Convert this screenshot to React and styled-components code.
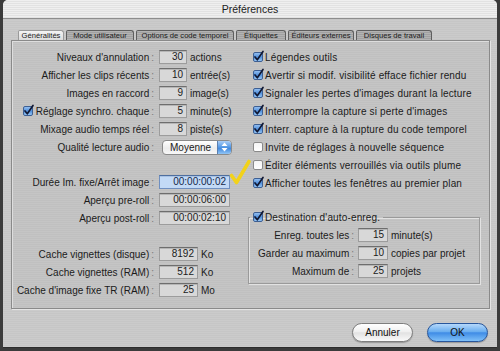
import React from 'react';
import styled, { createGlobalStyle } from 'styled-components';

const Global = createGlobalStyle`
  html, body { margin: 0; padding: 0; background: #3b3b3b; }
  body {
    width: 500px; height: 351px; overflow: hidden;
    font-family: "Liberation Sans", Arial, sans-serif;
    color: #1b1b1b;
  }
`;

const Window = styled.div`
  margin-left: 3px;
  width: 494px;
  height: 348px;
  box-sizing: border-box;
  display: flex;
  flex-direction: column;
  background: repeating-linear-gradient(180deg, #cbcbcb 0 1px, #c6c6c6 1px 2px);
  border-radius: 5px 5px 0 0;
  border-bottom: 1px solid #2c2c2c;
  overflow: hidden;
`;

const TitleBar = styled.div`
  height: 19px;
  flex: none;
  box-sizing: border-box;
  display: flex;
  align-items: center;
  justify-content: center;
  background: repeating-linear-gradient(180deg, #efefef 0 1px, #e2e2e2 1px 2px);
  border-bottom: 1px solid #8d8d8d;
  font-size: 10.5px;
  color: #1c1c1c;
`;

const Tabs = styled.div`
  display: flex;
  height: 10px;
  margin-top: 11px;
  padding-left: 15px;
  flex: none;
`;

const Tab = styled.div`
  width: ${p => p.$w}px;
  height: 10px;
  box-sizing: border-box;
  display: flex;
  align-items: center;
  justify-content: center;
  font-size: 7.6px;
  white-space: nowrap;
  margin-right: 2px;
  color: #1a1a1a;
  border: 1px solid ${p => (p.$active ? '#9a9a9a' : '#5e5e5e')};
  border-bottom: none;
  border-radius: 2px 3px 0 0;
  background: ${p =>
    p.$active
      ? 'linear-gradient(#f4f4f4, #dcdcdc)'
      : 'repeating-linear-gradient(180deg, #b3b3b3 0 1px, #a1a1a1 1px 2px)'};
`;

const Panel = styled.div`
  margin: 0 7px 0 8px;
  height: 269px;
  box-sizing: border-box;
  flex: none;
  display: flex;
  padding-top: 7px;
  border: 1px solid #8a8a8a;
  box-shadow: inset 1px 1px 0 #dedede, 1px 1px 0 #e4e4e4;
  background: repeating-linear-gradient(180deg, #c5c5c5 0 1px, #c0c0c0 1px 2px);
`;

const Column = styled.div`
  width: ${p => p.$w}px;
  flex: none;
  display: flex;
  flex-direction: column;
`;

const Section = styled.div`
  display: flex;
  flex-direction: column;
  margin-top: ${p => p.$mt || 0}px;
`;

const Row = styled.div`
  display: flex;
  align-items: center;
  height: 18px;
  flex: none;
  padding-left: ${p => p.$pl || 0}px;
`;

const Label = styled.span`
  width: ${p => p.$w}px;
  flex: none;
  display: flex;
  justify-content: flex-end;
  align-items: center;
  white-space: nowrap;
  font-size: 10px;
`;

const Colon = styled.span`
  color: #7a7a7a;
  margin-left: 2px;
`;

const Field = styled.div`
  width: ${p => p.$w}px;
  height: 14px;
  flex: none;
  margin-left: ${p => (p.$ml == null ? 5 : p.$ml)}px;
  box-sizing: border-box;
  border: 1px solid ${p => (p.$focus ? '#6f8fc0' : '#9c9c9c')};
  border-top-color: ${p => (p.$focus ? '#4f6f9f' : '#6e6e6e')};
  background: ${p => (p.$focus ? '#c3daf6' : '#d8d8d8')};
  box-shadow: inset 0 1px 0 ${p => (p.$focus ? '#a8c2e4' : '#b6b6b6')};
  text-align: right;
  padding-right: 3px;
  font-size: 10px;
  line-height: 12px;
  color: ${p => (p.$focus ? '#14284a' : '#1b1b1b')};
`;

const Unit = styled.span`
  margin-left: 3px;
  font-size: 10px;
  white-space: nowrap;
`;

const CheckText = styled.span`
  margin-left: 2px;
  font-size: 10px;
  letter-spacing: 0.15px;
  white-space: nowrap;
`;

const Select = styled.div`
  margin-left: 8px;
  width: 70px;
  height: 15px;
  box-sizing: border-box;
  display: flex;
  border: 1px solid #8a8a8a;
  border-radius: 4px;
  overflow: hidden;
  background: linear-gradient(#ffffff, #ececec 55%, #f8f8f8);
`;

const SelectText = styled.span`
  flex: 1;
  padding-left: 7px;
  font-size: 10px;
  line-height: 13px;
`;

const SelectArrows = styled.span`
  width: 13px;
  display: flex;
  align-items: center;
  justify-content: center;
  background: linear-gradient(#a9cdf6, #4f95e4 50%, #3a82da 52%, #92c6f6);
  border-left: 1px solid #5a7fb0;
`;

const Group = styled.fieldset`
  margin: 16px 0 0 0;
  padding: 0 0 3px 0;
  width: 232px;
  box-sizing: border-box;
  border: 1px solid #9a9a9a;
  box-shadow: inset 1px 1px 0 #e2e2e2, 1px 1px 0 #e2e2e2;
  display: flex;
  flex-direction: column;
`;

const Legend = styled.legend`
  padding: 0 3px 0 3px;
  margin-left: 1px;
  height: 18px;
  display: flex;
  align-items: center;
`;

const Footer = styled.div`
  display: flex;
  justify-content: flex-end;
  gap: 14px;
  padding: 14px 9px 0 0;
`;

const Button = styled.button`
  width: 61px;
  height: 19px;
  padding: 0;
  border-radius: 10px;
  font-family: "Liberation Sans", Arial, sans-serif;
  font-size: 10px;
  color: #111;
  border: 1px solid ${p => (p.$primary ? '#27569c' : '#7e7e7e')};
  background: ${p =>
    p.$primary
      ? 'linear-gradient(#b5d8fb 0%, #6aaef0 45%, #3f8ce6 52%, #7fc0f8 100%)'
      : 'linear-gradient(#ffffff 0%, #f0f0f0 45%, #e2e2e2 52%, #fafafa 100%)'};
  box-shadow: 0 1px 1px rgba(0,0,0,0.25);
`;

const Mark = styled.svg`
  flex: none;
  margin-bottom: 20px;
  overflow: visible;
`;

function Check({ on }) {
  return (
    <svg width="10" height="10" viewBox="0 0 10 10" style={{ flex: 'none', overflow: 'visible' }}>
      <defs>
        <linearGradient id="cbg" x1="0" y1="0" x2="0" y2="1">
          <stop offset="0" stopColor="#9cc4f2" />
          <stop offset="0.5" stopColor="#4f8fdc" />
          <stop offset="1" stopColor="#9ccaf6" />
        </linearGradient>
        <linearGradient id="cbw" x1="0" y1="0" x2="0" y2="1">
          <stop offset="0" stopColor="#f4f4f4" />
          <stop offset="1" stopColor="#ffffff" />
        </linearGradient>
      </defs>
      <rect x="0.5" y="0.5" width="9" height="9" rx="1.5"
        fill={on ? 'url(#cbg)' : 'url(#cbw)'} stroke={on ? '#3d5f93' : '#8a8a8a'} />
      {on && (
        <path d="M2 5 L4.3 7.8 L10 -0.5" fill="none" stroke="#111833" strokeWidth="1.7"
          strokeLinecap="round" strokeLinejoin="round" />
      )}
    </svg>
  );
}

function NumRow({ label, value, unit, w = 28, lw = 142, check }) {
  return (
    <Row>
      <Label $w={lw}>
        {check && <Check on />}
        <span style={{ marginLeft: check ? 3 : 0 }}>{label}</span>
        <Colon>:</Colon>
      </Label>
      <Field $w={w}>{value}</Field>
      {unit && <Unit>{unit}</Unit>}
    </Row>
  );
}

function CheckRow({ on, children }) {
  return (
    <Row $pl={5}>
      <Check on={on} />
      <CheckText>{children}</CheckText>
    </Row>
  );
}

function GroupRow({ label, value, unit }) {
  return (
    <Row>
      <Label $w={105}>
        {label}
        <Colon>:</Colon>
      </Label>
      <Field $w={30} $ml={4}>{value}</Field>
      <Unit>{unit}</Unit>
    </Row>
  );
}

export default function App() {
  return (
    <>
      <Global />
      <Window>
        <TitleBar>Préférences</TitleBar>
        <Tabs>
          <Tab $w={46} $active>Généralités</Tab>
          <Tab $w={68}>Mode utilisateur</Tab>
          <Tab $w={98}>Options de code temporel</Tab>
          <Tab $w={50}>Étiquettes</Tab>
          <Tab $w={66}>Éditeurs externes</Tab>
          <Tab $w={76}>Disques de travail</Tab>
        </Tabs>
        <Panel>
          <Column $w={236}>
            <Section>
              <NumRow label="Niveaux d'annulation" value="30" unit="actions" />
              <NumRow label="Afficher les clips récents" value="10" unit="entrée(s)" />
              <NumRow label="Images en raccord" value="9" unit="image(s)" />
              <NumRow label="Réglage synchro. chaque" value="5" unit="minute(s)" check />
              <NumRow label="Mixage audio temps réel" value="8" unit="piste(s)" />
              <Row>
                <Label $w={142}>
                  Qualité lecture audio<Colon>:</Colon>
                </Label>
                <Select>
                  <SelectText>Moyenne</SelectText>
                  <SelectArrows>
                    <svg width="7" height="10" viewBox="0 0 7 10">
                      <path d="M3.5 0.5 L6.5 4 L0.5 4 Z M3.5 9.5 L6.5 6 L0.5 6 Z" fill="#ffffff" />
                    </svg>
                  </SelectArrows>
                </Select>
              </Row>
            </Section>
            <Section $mt={17}>
              <Row>
                <Label $w={142}>
                  Durée Im. fixe/Arrêt image<Colon>:</Colon>
                </Label>
                <Field $w={71} $focus>00:00:00:02</Field>
                <Mark width="20" height="25" viewBox="0 0 20 25">
                  <path d="M1.5 15.5 L6.5 22.5 L19 1.5" fill="none" stroke="#f2d21a" strokeWidth="3.6"
                    strokeLinecap="round" strokeLinejoin="round" />
                </Mark>
              </Row>
              <NumRow label="Aperçu pre-roll" value="00:00:06:00" w={71} />
              <NumRow label="Aperçu post-roll" value="00:00:02:10" w={71} />
            </Section>
            <Section $mt={18}>
              <NumRow label="Cache vignettes (disque)" value="8192" unit="Ko" w={39} />
              <NumRow label="Cache vignettes (RAM)" value="512" unit="Ko" w={39} />
              <NumRow label="Cache d'image fixe TR (RAM)" value="25" unit="Mo" w={39} />
            </Section>
          </Column>
          <Column $w={236}>
            <CheckRow on>Légendes outils</CheckRow>
            <CheckRow on>Avertir si modif. visibilité efface fichier rendu</CheckRow>
            <CheckRow on>Signaler les pertes d'images durant la lecture</CheckRow>
            <CheckRow on>Interrompre la capture si perte d'images</CheckRow>
            <CheckRow on>Interr. capture à la rupture du code temporel</CheckRow>
            <CheckRow>Invite de réglages à nouvelle séquence</CheckRow>
            <CheckRow>Éditer éléments verrouillés via outils plume</CheckRow>
            <CheckRow on>Afficher toutes les fenêtres au premier plan</CheckRow>
            <Group>
              <Legend>
                <Check on />
                <CheckText>Destination d'auto-enreg.</CheckText>
              </Legend>
              <GroupRow label="Enreg. toutes les" value="15" unit="minute(s)" />
              <GroupRow label="Garder au maximum" value="10" unit="copies par projet" />
              <GroupRow label="Maximum de" value="25" unit="projets" />
            </Group>
          </Column>
        </Panel>
        <Footer>
          <Button>Annuler</Button>
          <Button $primary>OK</Button>
        </Footer>
      </Window>
    </>
  );
}
